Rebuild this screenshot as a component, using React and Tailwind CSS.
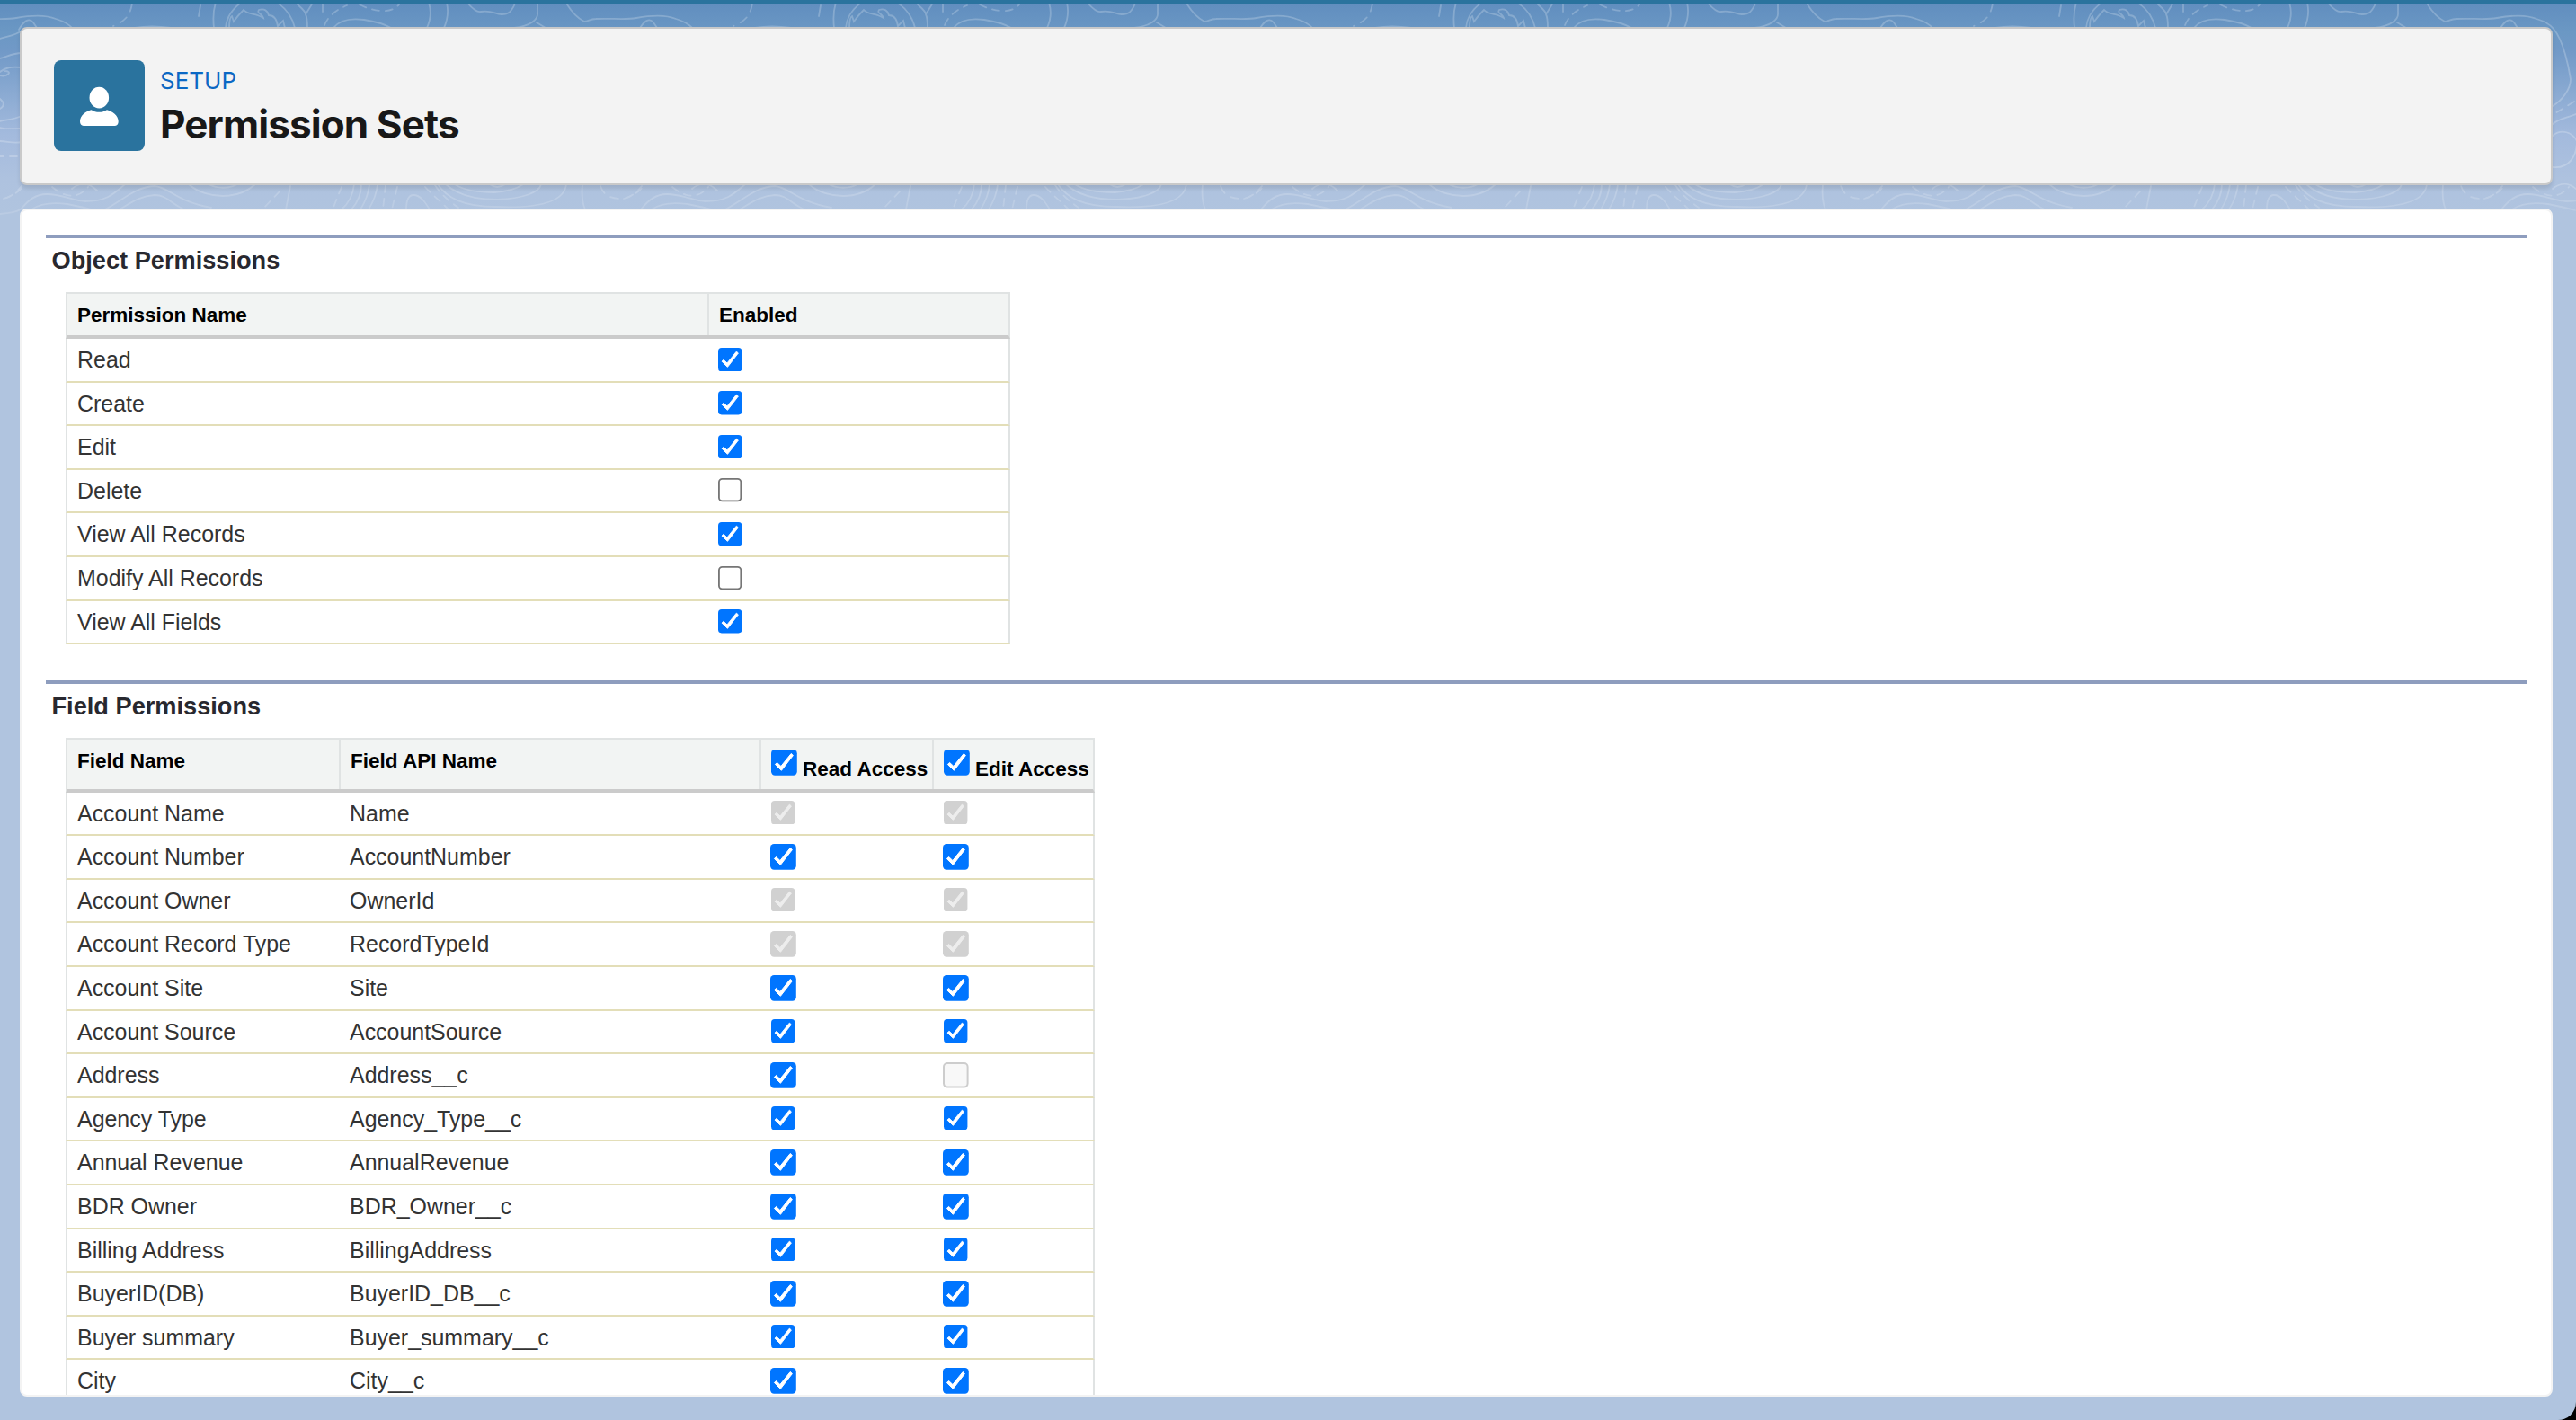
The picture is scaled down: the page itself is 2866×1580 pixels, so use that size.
import React from "react";
import clsx from "clsx";

const objectPermissions = [
  { name: "Read", enabled: true },
  { name: "Create", enabled: true },
  { name: "Edit", enabled: true },
  { name: "Delete", enabled: false },
  { name: "View All Records", enabled: true },
  { name: "Modify All Records", enabled: false },
  { name: "View All Fields", enabled: true },
];

const fieldPermissions = [
  { name: "Account Name", api: "Name", locked: true },
  { name: "Account Number", api: "AccountNumber", large: true },
  { name: "Account Owner", api: "OwnerId", locked: true },
  { name: "Account Record Type", api: "RecordTypeId", locked: true, large: true },
  { name: "Account Site", api: "Site", large: true },
  { name: "Account Source", api: "AccountSource" },
  { name: "Address", api: "Address__c", readOnly: true, large: true },
  { name: "Agency Type", api: "Agency_Type__c" },
  { name: "Annual Revenue", api: "AnnualRevenue", large: true },
  { name: "BDR Owner", api: "BDR_Owner__c", large: true },
  { name: "Billing Address", api: "BillingAddress" },
  { name: "BuyerID(DB)", api: "BuyerID_DB__c", large: true },
  { name: "Buyer summary", api: "Buyer_summary__c" },
  { name: "City", api: "City__c", large: true },
];

function Checkbox(props) {
  const { checked, disabled, large, className } = props;
  const border = disabled ? "#cdcdcd" : "#767676";
  const tick = disabled ? "#ededed" : "#fff";

  return (
    <svg
      role="checkbox"
      aria-checked={!!checked}
      viewBox="0 0 29 29"
      className={clsx(
        "shrink-0",
        large ? "size-[29px]" : "size-[26.6px]",
        className
      )}
    >
      {checked ? (
        <>
          <rect width="28.8" height="28.8" rx="4.2" fill={disabled ? "#d1d1d1" : "#0075ff"} />
          <path
            d="M4.4 16.5 6.5 14.4 10.9 18.5 22.2 4.5 24.4 6.5 11.4 23.3Z"
            fill={tick}
            stroke={tick}
            strokeWidth="1"
          />
        </>
      ) : (
        <rect
          x="1"
          y="1"
          width="26.6"
          height="26.6"
          rx="4"
          fill={disabled ? "#f8f8f8" : "#fff"}
          stroke={border}
          strokeWidth="2"
        />
      )}
    </svg>
  );
}

// one 690px wide tile of the contour lines
function ContourTile() {
  return (
    <g id="contour" fill="none" stroke="#fff" strokeWidth="1.8" strokeLinecap="round">
      <path d="M629 2C635 12 642 20 650 24C655 24 656 21 663 21C680 20 695 22.5 708 20C730 16 745 18 752 21C762 24 768 28 771 32C782 45 788 75 790 88C790 100 780 112 770 118" />
      <path d="M711 33C716 24 722 19 727 25L731 31" />
      <path d="M147 4C145 14 143 22 126 29" strokeDasharray="9 8" />
      <path d="M223 6 221 18M240 3C237 12 237 22 238 31M251 31C252 18 260 9 268 3M308 3C320 10 326 22 328 31" />
      <path d="M255 31C255 24 256 19 258 18L260 24C264 18 268 14 271 11C276 17 284 14 293 20C292 15 285 15 288 11C294 9 298 12 299 17C305 17 308 22 309 29L315 23 317 31" />
      <path d="M329 3C334 8 340 12 340 16C342 20 342 26 342 31M348 3 340 16M359 4V13" />
      <path d="M361 28C365 18 374 11 386 6" strokeDasharray="8 7" />
      <path d="M371 31C378 22 390 20 405 22C418 24 428 27 435 31" />
      <path d="M400 5C415 13 435 16 444 5" strokeDasharray="8 7" />
      <path d="M477 3C480 12 480 20 475 31M497 3C499 12 498 22 494 31" />
      <path d="M519 2C524 8 530 14 535 13C545 11 550 15 558 16C566 16 569 13 573 4M598 3V14C599 22 590 29 572 31M597 25 607 31M150 31Q168 28 190 31" />
      <path d="M0 43C8 40 15 40 23 35M0 65C8 63 14 59 24 59M0 80C6 75 12 74 24 75M0 84C8 86 15 79 5 79M0 110C5 114 5 118 0 121M0 135C8 133 15 133 24 129M0 142C8 144 16 143 24 143M0 157C8 157 14 160 24 158" />
      <path d="M-4 174H22M4 221C14 218 20 214 25 208M104 113 83 126" strokeDasharray="8 7" />
      <path d="M80 138C88 131 98 131 108 126M80 151C90 143 102 147 107 157C107 174 98 188 80 186M80 210C90 202 100 204 108 212" />
      <path d="M0 238C12 237 18 236 23 233C32 222 40 216 52 216C70 216 82 224 95 224C120 224 128 214 139 205" />
      <path d="M35 233C45 226 60 225 75 227C85 229 95 231 105 234M117 233C138 222 150 208 172 207C188 208 195 224 235 231M133 233C145 226 155 218 172 217C185 217 190 226 203 232" />
      <path d="M210 205C220 214 235 218 248 218C265 218 275 213 284 205M232 205C242 210 255 210 264 205M323 207 318 233" />
      <path d="M58 208C75 222 88 220 98 208M311 213 292 233M429 206 426 233M442 208 436 233M473 208C480 216 488 222 498 232M484 206C492 218 500 224 510 231M380 208 370 233" strokeDasharray="8 7" />
      <path d="M394 205C393 216 389 225 380 233M402 205C402 216 398 225 391 233M411 205C410 216 406 225 401 233M420 205C419 216 415 225 410 233" />
      <path d="M452 233C452 223 454 217 460 217C468 217 473 225 478 233" />
      <path d="M487 205C497 220 515 230 552 230C600 232 628 224 630 205M496 205C510 218 530 222 553 222C582 221 600 214 602 205M506 205C516 212 530 214 550 214C565 213 575 210 582 205M545 205Q553 211 562 205M648 205C647 215 647 224 651 233" />
      <path d="M668 207C672 218 680 221 692 221C702 220 708 214 714 207" strokeDasharray="9 8" />
    </g>
  );
}

function Backdrop() {
  return (
    <svg className="absolute top-0 left-0 w-full h-[250px]" aria-hidden="true">
      <defs>
        <ContourTile />
        <linearGradient id="fade" x1="0" y1="0" x2="0" y2="1">
          <stop offset="0" stopColor="#fff" stopOpacity="0.22" />
          <stop offset="0.8" stopColor="#fff" stopOpacity="0.22" />
          <stop offset="1" stopColor="#fff" stopOpacity="0.1" />
        </linearGradient>
        <mask id="contour-mask" maskUnits="userSpaceOnUse" x="0" y="0" width="2866" height="250">
          <rect width="2866" height="250" fill="url(#fade)" />
        </mask>
      </defs>
      <g mask="url(#contour-mask)">
        <use href="#contour" x="-690" />
        <use href="#contour" x="0" />
        <use href="#contour" x="690" />
        <use href="#contour" x="1380" />
        <use href="#contour" x="2070" />
        <use href="#contour" x="2760" />
      </g>
    </svg>
  );
}

function PageHeader() {
  return (
    <header className="flex items-start h-[176px] rounded-lg border-2 border-[#c9c9c9] bg-[#f3f3f3] pl-9 pt-[35px] shadow-[0_4px_4px_rgba(0,0,0,0.1)]">
      <div className="size-[101px] rounded-lg bg-[#2a739e]">
        <svg viewBox="0 0 101 101" fill="#fff">
          <ellipse cx="50.3" cy="41.7" rx="10.8" ry="11.9" />
          <path d="M41.5 55.2C47 58.6 53.5 58.6 59 55.2C65 56.5 71.7 61.5 71.7 68C71.7 71 70.5 72.9 68 72.9H33C30.3 72.9 29 71 29 68C29 61.5 35.5 56.5 41.5 55.2Z" />
        </svg>
      </div>
      <div className="ml-[17px] font-[Inter] whitespace-nowrap">
        <p className="mt-[7px] text-[26px] leading-8 text-[#0b68c4]">SETUP</p>
        <h1 className="mt-[5px] text-[44px] leading-[54px] font-bold tracking-[-0.9px] text-[#181818]">
          Permission Sets
        </h1>
      </div>
    </header>
  );
}

function SectionTitle({ children }) {
  return (
    <h2 className="h-[64px] border-t-4 border-[#8e9dbe] pl-[6.5px] pt-[9px] text-[27.2px] leading-8 font-bold text-[#28282f]">
      {children}
    </h2>
  );
}

function HeadCell({ className, children }) {
  return (
    <div className={clsx("border-r-2 border-[#e0e3e3] pl-[11px] last:border-r-0", className)}>
      {children}
    </div>
  );
}

function ObjectTable() {
  return (
    <div className="ml-[22px] w-[1051px]">
      <div className="grid grid-cols-[714px_1fr] h-[52.1px] border-2 border-b-4 border-[#e0e3e3] border-b-[#cbcbcb] bg-[#f2f4f3] text-[22.5px] leading-7 font-bold text-black">
        <HeadCell className="pt-[10px]">Permission Name</HeadCell>
        <HeadCell className="pt-[10px]">Enabled</HeadCell>
      </div>
      {objectPermissions.map((row) => (
        <div
          key={row.name}
          className="grid grid-cols-[714px_1fr] h-[48.6px] border-x-2 border-b-2 border-x-[#e0e3e3] border-b-[#e3deb8] text-[24.95px]"
        >
          <div className="pl-[11px] pt-[8px] leading-[30px]">{row.name}</div>
          <div className="pl-[10px] pt-[9.6px]">
            <Checkbox checked={row.enabled} />
          </div>
        </div>
      ))}
    </div>
  );
}

function FieldTable() {
  return (
    <div className="ml-[22px] w-[1145px]">
      <div className="grid grid-cols-[304px_468px_192px_1fr] h-[60.7px] border-2 border-b-4 border-[#e0e3e3] border-b-[#cbcbcb] bg-[#f2f4f3] text-[22.5px] leading-7 font-bold text-black">
        <HeadCell className="pt-[10px]">Field Name</HeadCell>
        <HeadCell className="pt-[10px]">Field API Name</HeadCell>
        <HeadCell className="flex items-start pt-[11px]">
          <Checkbox checked large />
          <span className="ml-[6px] mt-[8px] whitespace-nowrap">Read Access</span>
        </HeadCell>
        <HeadCell className="flex items-start pt-[11px]">
          <Checkbox checked large />
          <span className="ml-[6px] mt-[8px] whitespace-nowrap">Edit Access</span>
        </HeadCell>
      </div>
      {fieldPermissions.map((row) => (
        <div
          key={row.api}
          className="grid grid-cols-[304px_468px_192px_1fr] h-[48.6px] border-x-2 border-b-2 border-x-[#e0e3e3] border-b-[#e3deb8] text-[24.95px]"
        >
          <div className="pl-[11px] pt-[8px] leading-[30px]">{row.name}</div>
          <div className="pl-[10px] pt-[8px] leading-[30px]">{row.api}</div>
          <div className={clsx("pt-[9px]", row.large ? "pl-[10px]" : "pl-[11px]")}>
            <Checkbox checked disabled={row.locked} large={row.large} />
          </div>
          <div className={clsx("pt-[9px]", row.large ? "pl-[10px]" : "pl-[11px]")}>
            <Checkbox
              checked={!row.readOnly}
              disabled={row.locked || row.readOnly}
              large={row.large}
            />
          </div>
        </div>
      ))}
    </div>
  );
}

function App() {
  return (
    <div className="w-[2866px] h-[1580px] bg-black">
      <div className="relative h-full overflow-hidden rounded-br-[20px] border-t-4 border-[#2a739e] bg-[#b0c4df]">
        <div className="absolute inset-x-0 top-0 h-[240px] bg-[linear-gradient(to_bottom,#618ebf_0px,#6b98c4_32px,#7199c7_52px,#8aaad2_100px,#a3badd_145px,#aec2df_195px,#b0c4df_235px)]" />
        <div className="absolute inset-x-0 -top-1">
          <Backdrop />
        </div>

        <div className="relative flex flex-col gap-[26px] pl-[22px] pr-[26px] pt-[26px]">
          <PageHeader />
          <main className="h-[1322px] overflow-hidden rounded-lg border-2 border-[#f3f3f3] bg-white px-[27px] pt-[27px] font-['Liberation_Sans',Arial,sans-serif] text-[#333]">
            <section className="h-[496px]">
              <SectionTitle>Object Permissions</SectionTitle>
              <ObjectTable />
            </section>
            <section>
              <SectionTitle>Field Permissions</SectionTitle>
              <FieldTable />
            </section>
          </main>
        </div>
      </div>
    </div>
  );
}

export default App;
